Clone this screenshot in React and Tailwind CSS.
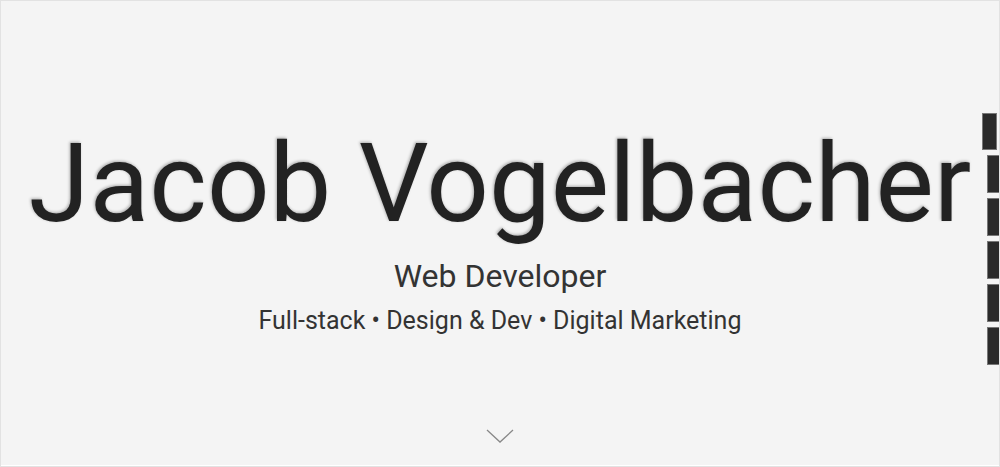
import React from "react";

const NavBars = () => {
  const bars = [0, 1, 2, 3, 4, 5];
  return (
    <div className="absolute right-0 top-[112px] flex flex-col items-end gap-[5px]">
      {bars.map((i) => (
        <div
          key={i}
          className={
            i === 0
              ? "h-[37px] w-[15px] mr-[2px] bg-[#2a2a2a] border border-[#777]"
              : "h-[38px] w-[12px] bg-[#2a2a2a] border border-[#777] border-r-0"
          }
        ></div>
      ))}
    </div>
  );
};

const App = () => {
  return (
    <div className="relative h-[467px] w-[1000px] overflow-hidden bg-[#f4f4f4] border-t border-l border-r border-[#e2e2e2] font-['Roboto',sans-serif]">
      <div className="flex flex-col items-center pt-[118px]">
        <h1 className="text-[110px] leading-[130px] text-[#222] [text-shadow:-1px_-1px_3px_rgba(0,0,0,0.3)]">
          Jacob Vogelbacher
        </h1>
        <h2 className="mt-[7px] text-[32px] leading-[40px] text-[#333]">
          Web Developer
        </h2>
        <p className="mt-[9px] text-[25px] leading-[32px] text-[#333]">
          Full-stack &bull; Design &amp; Dev &bull; Digital Marketing
        </p>
      </div>
      <div className="absolute left-1/2 top-[428px] -translate-x-1/2">
        <svg width="28" height="15" viewBox="0 0 28 15" fill="none">
          <path d="M1 1 L14 13 L27 1" stroke="#888" strokeWidth="1.3" />
        </svg>
      </div>
      <NavBars />
      <div className="absolute bottom-0 left-0 right-0 h-[2px] border-t border-white bg-[#e2e2e2]"></div>
    </div>
  );
};

export default App;
